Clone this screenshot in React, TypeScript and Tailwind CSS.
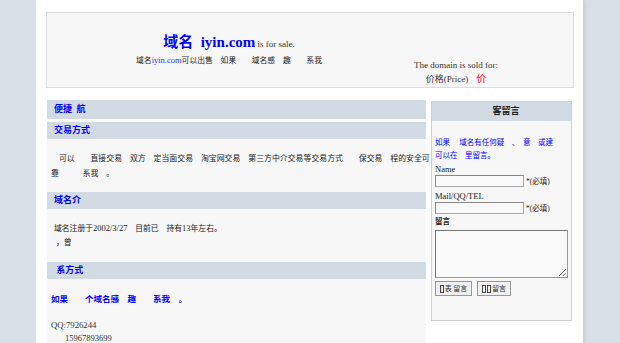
import React from "react";

const Bar = ({ children, className = "" }: { children: React.ReactNode; className?: string }) => (
  <div className={`bg-[#d2dbe3] pl-[7px] text-[9px] font-bold text-[#0000ff] ${className}`}>{children}</div>
);

const Tofu = () => <span className="inline-block w-[4px] h-[8px] border border-[#444] align-[-1px] mr-[1px]" />;

const App = () => {
  return (
    <div className="min-h-[343px] bg-[#d9dfe7] font-['Liberation_Serif','Noto_Sans_CJK_SC',serif] text-[#222]">
      <div className="ml-[36px] w-[547px] min-h-[343px] bg-white pt-[12px] pl-[10px] shadow-[2px_0_3px_rgba(0,0,0,0.08)]">
        {/* header */}
        <div className="w-[528px] h-[76px] border border-[#dcdcdc] bg-[#f7f7f7] flex">
          <div className="w-[364px] flex flex-col items-center pt-[20px]">
            <div className="h-[18px] leading-[18px] whitespace-nowrap">
              <span className="text-[15px] font-bold text-[#0000ff]">域名&nbsp; iyin.com</span>
              <span className="text-[9px] text-[#333]"> is for sale.</span>
            </div>
            <div className="mt-[3px] text-[7.8px] leading-[12px] whitespace-nowrap">
              域名<span className="text-[#3333ff] text-[8.5px]">iyin.com</span>可以出售　如果　　域名感　趣　　系我
            </div>
          </div>
          <div className="w-[90px] flex flex-col items-center pt-[45px] text-[9px] text-[#333] whitespace-nowrap">
            <div className="leading-[14px]">The domain is sold for:</div>
            <div className="leading-[14px]">
              价格(Price)<span className="ml-[8px] text-[10px] text-[#ff0000]">价</span>
            </div>
          </div>
        </div>

        <div className="flex mt-[12px]">
          {/* left column */}
          <div className="w-[379px] ml-[1px]">
            <Bar className="h-[19px] leading-[19px]">便捷&ensp;航</Bar>
            <Bar className="mt-[3px] h-[17px] leading-[17px]">交易方式</Bar>
            <div className="h-[53px] bg-[#f7f7f7] pt-[12px] px-[4px] text-[7.9px] leading-[15px] whitespace-nowrap">
              {"\u3000可以\u3000\u3000直接交易\u3000双方\u3000定当面交易\u3000淘宝网交易\u3000第三方中介交易等交易方式\u3000\u3000保交易\u3000程的安全可"}
              <br />
              {"靠\u3000\u3000\u3000系我\u3000。"}
            </div>
            <Bar className="h-[17px] leading-[17px]">域名介</Bar>
            <div className="h-[53px] bg-[#f7f7f7] pt-[12px] px-[7px] text-[7.8px] leading-[14px]">
              域名注册于<span className="text-[8.5px]">2002/3/27</span>{"\u3000目前已\u3000持有"}<span className="text-[8.5px]">13</span>年左右。
              <br />
              &nbsp;，曾
            </div>
            <Bar className="h-[17px] leading-[17px]">&nbsp;系方式</Bar>
            <div className="bg-[#f7f7f7] pt-[13px] px-[4px] pb-[4px]">
              <div className="text-[8.5px] leading-[14px] text-[#0000ff] font-bold">{"如果\u3000\u3000个域名感\u3000趣\u3000\u3000系我\u3000。"}</div>
              <div className="mt-[12px] text-[8.7px] leading-[14px] text-[#333]">QQ:7926244</div>
              <div className="text-[8.5px] leading-[12px] text-[#333] pl-[14px]">15967893699</div>
            </div>
          </div>

          {/* right column */}
          <div className="ml-[5px] w-[141px] h-[220px] mt-[1px] border border-[#d0d0d0] bg-[#f7f7f7]">
            <div className="h-[19px] leading-[19px] bg-[#d2dbe3] text-center text-[9px] font-bold text-[#222]">{"\u3000客留言"}</div>
            <div className="px-[3px]">
              <div className="pt-[15px] text-[7.5px] leading-[13px] text-[#0000ff] whitespace-nowrap">
                {"如果\u3000 域名有任何疑\u3000、\u3000意\u3000或建"}
                <br />
                {"可以在\u3000里留言。"}
              </div>
              <div className="mt-[1px] text-[8.5px] leading-[12px] text-[#222]">Name</div>
              <div className="flex items-end">
                <input className="w-[89px] h-[12px] border border-[#a8a8a8] border-t-[#888] border-l-[#888] bg-[#f9f9f9]" />
                <span className="ml-[2px] text-[7.5px] leading-[10px] text-[#222]">*(必填)</span>
              </div>
              <div className="mt-[3px] text-[8.5px] leading-[12px] text-[#222]">Mail/QQ/TEL</div>
              <div className="flex items-end">
                <input className="w-[89px] h-[12px] border border-[#a8a8a8] border-t-[#888] border-l-[#888] bg-[#f9f9f9]" />
                <span className="ml-[2px] text-[7.5px] leading-[10px] text-[#222]">*(必填)</span>
              </div>
              <div className="text-[7.5px] leading-[16px] font-bold text-[#222]">留言</div>
              <textarea className="block w-[133px] h-[48px] border border-[#999] border-t-[#777] border-l-[#777] bg-[#f9f9f9] resize" />
              <div className="flex gap-[5px] mt-[3px]">
                <button className="w-[37px] h-[15px] border border-[#999] bg-[#f0f0f0] text-[7px] leading-[12px] text-[#333] flex items-center justify-center">
                  <Tofu />表 留言
                </button>
                <button className="w-[34px] h-[15px] border border-[#999] bg-[#f0f0f0] text-[7px] leading-[12px] text-[#333] flex items-center justify-center">
                  <Tofu />
                  <Tofu />留言
                </button>
              </div>
            </div>
          </div>
        </div>
      </div>
    </div>
  );
};

export default App;
